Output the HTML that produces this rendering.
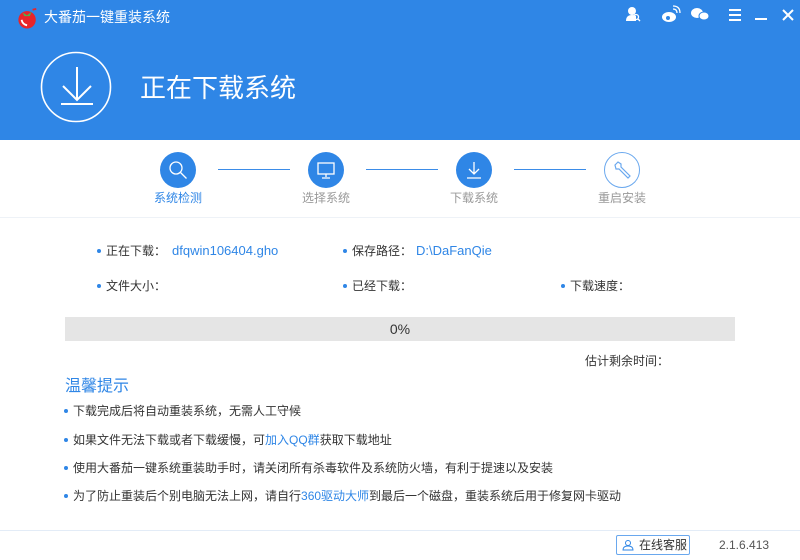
<!DOCTYPE html>
<html><head><meta charset="utf-8"><style>
*{margin:0;padding:0;box-sizing:border-box}
body{width:800px;height:560px;overflow:hidden;background:#fff;font-family:"Liberation Sans","Noto Sans CJK SC",sans-serif;font-size:12px;color:#333;position:relative}
.a{position:absolute;white-space:nowrap}
.hdr{position:absolute;left:0;top:0;width:800px;height:140px;background:#2F86E6}
.b{color:#2F86E6}
.dot{display:inline-block;width:4px;height:4px;border-radius:50%;background:#2F86E6;vertical-align:middle;margin-right:5px;position:relative;top:-1px}
.step{position:absolute;width:36px;height:36px;border-radius:50%;background:#2F86E6;top:152px}
.line{position:absolute;top:169px;height:1px;background:#3b8ce8;width:72px}
.lab{position:absolute;top:189px;font-size:12px;color:#999;width:80px;text-align:center}
.info{font-size:12px}
.info .l{font-size:13px}
.tip{font-size:12px}
</style></head><body>
<div class="hdr"></div>
<svg class="a" style="left:16px;top:7px" width="24" height="22" viewBox="0 0 26 24"><circle cx="12" cy="14" r="9.5" fill="#e8242a"/><path d="M7 6 L12 9 L17 5 L15 10 L9 10Z" fill="#4caf50"/><path d="M6 14 q1 5 6 6" stroke="#fff" stroke-width="2" fill="none"/><path d="M18 3 l4 -1" stroke="#e8242a" stroke-width="2"/></svg>
<div class="a" style="left:44px;top:7px;color:#fff;font-size:14px">大番茄一键重装系统</div>
<svg class="a" style="left:600px;top:0" width="200" height="30" viewBox="0 0 200 30" fill="none" stroke="#fff" stroke-width="2">
<circle cx="32" cy="11" r="4" fill="#fff" stroke="none"/><path d="M26 21 q0-6 6-6 q3 0 4 1 v5z" fill="#fff" stroke="none"/><circle cx="36" cy="17" r="2.5" stroke-width="1.3"/><path d="M38 19 l2 2" stroke-width="1.3"/>
<ellipse cx="69" cy="17" rx="7" ry="5" fill="#fff" stroke="none"/><circle cx="68" cy="18" r="2" fill="#2F86E6" stroke="none"/><path d="M73 9 q4 0 4 4" stroke-width="1.3"/><path d="M73 6 q7 0 7 7" stroke-width="1.3"/>
<ellipse cx="97" cy="13" rx="6" ry="5" fill="#fff" stroke="none"/><ellipse cx="104" cy="16" rx="5" ry="4" fill="#fff" stroke="#2F86E6" stroke-width="1"/>
<path d="M129 10h12M129 15h12M129 20h12"/><path d="M155 19h12"/><path d="M183 10l10 10M193 10l-10 10"/></svg>
<svg class="a" style="left:40px;top:51px" width="72" height="72" viewBox="0 0 72 72" fill="none" stroke="#fff" stroke-width="1.6"><circle cx="36" cy="36" r="34.5"/><path d="M37 16v32M23 35l14 14 14-14M21 53h32" stroke-width="2"/></svg>
<div class="a" style="left:140px;top:68px;color:#fff;font-size:26px">正在下载系统</div>
<div class="step" style="left:160px"></div><svg class="a" style="left:160px;top:152px" width="36" height="36" fill="none" stroke="#fff" stroke-width="1.3"><circle cx="16" cy="16" r="6"/><path d="M20.5 20.5l6 6"/></svg>
<div class="step" style="left:308px"></div><svg class="a" style="left:308px;top:152px" width="36" height="36" fill="none" stroke="#fff" stroke-width="1.3"><rect x="10" y="11" width="16" height="11"/><path d="M18 22v3M14 26h8"/></svg>
<div class="step" style="left:456px"></div><svg class="a" style="left:456px;top:152px" width="36" height="36" fill="none" stroke="#fff" stroke-width="1.3"><path d="M18 10v12M13 17l5 5 5-5M11 26h14"/></svg>
<div class="step" style="left:604px;background:#fff;border:1px solid #6aa8ee"></div><svg class="a" style="left:604px;top:152px" width="36" height="36" fill="none" stroke="#6aa8ee" stroke-width="1.2"><path d="M11 13 l3-3 3 2 0 3 9 9-2 2-9-9-3 0z"/></svg>
<div class="line" style="left:218px"></div><div class="line" style="left:366px"></div><div class="line" style="left:514px"></div>
<div class="lab" style="left:138px;color:#2F86E6">系统检测</div>
<div class="lab" style="left:286px">选择系统</div>
<div class="lab" style="left:434px">下载系统</div>
<div class="lab" style="left:582px">重启安装</div>
<div class="a" style="left:0;top:217px;width:800px;height:1px;background:#eef2f7"></div>
<div class="a info" style="left:97px;top:242px"><span class="dot"></span>正在下载：<span class="b l" style="margin-left:6px">dfqwin106404.gho</span></div>
<div class="a info" style="left:343px;top:242px"><span class="dot"></span>保存路径：<span class="b l" style="margin-left:4px">D:\DaFanQie</span></div>
<div class="a info" style="left:97px;top:277px"><span class="dot"></span>文件大小：</div>
<div class="a info" style="left:343px;top:277px"><span class="dot"></span>已经下载：</div>
<div class="a info" style="left:561px;top:277px"><span class="dot"></span>下载速度：</div>
<div class="a" style="left:65px;top:317px;width:670px;height:24px;background:#e5e5e5;text-align:center;line-height:24px;font-size:14px">0%</div>
<div class="a info" style="left:585px;top:352px">估计剩余时间：</div>
<div class="a b" style="left:65px;top:372px;font-size:16px">温馨提示</div>
<div class="a tip" style="left:64px;top:402px"><span class="dot"></span>下载完成后将自动重装系统，无需人工守候</div>
<div class="a tip" style="left:64px;top:431px"><span class="dot"></span>如果文件无法下载或者下载缓慢，可<span class="b">加入QQ群</span>获取下载地址</div>
<div class="a tip" style="left:64px;top:459px"><span class="dot"></span>使用大番茄一键系统重装助手时，请关闭所有杀毒软件及系统防火墙，有利于提速以及安装</div>
<div class="a tip" style="left:64px;top:487px"><span class="dot"></span>为了防止重装后个别电脑无法上网，请自行<span class="b">360驱动大师</span>到最后一个磁盘，重装系统后用于修复网卡驱动</div>
<div class="a" style="left:0;top:530px;width:800px;height:1px;background:#e3ecf7"></div>
<div class="a" style="left:616px;top:535px;width:74px;height:20px;border:1px solid #6aa8ee;border-radius:2px;font-size:12px;line-height:18px;padding-left:22px;color:#333">在线客服</div>
<svg class="a" style="left:622px;top:539px" width="14" height="12" fill="none" stroke="#2F86E6" stroke-width="1"><circle cx="6" cy="4" r="2.5"/><path d="M1 11q0-4 5-4q5 0 5 4z"/></svg>
<div class="a" style="left:719px;top:538px;color:#555">2.1.6.413</div>
</body></html>
